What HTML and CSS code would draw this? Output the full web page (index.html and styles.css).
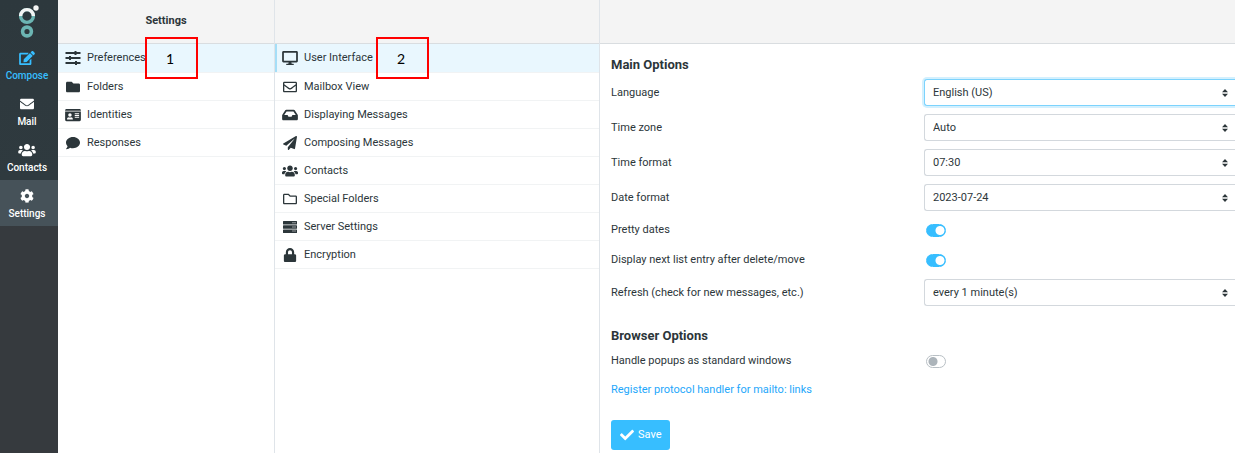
FILE: index.html
```
<!DOCTYPE html>
<html lang="en">

    <head>
        <meta charset="utf-8">
        <title>Settings</title>
        <link rel="stylesheet" href="styles.css">
    </head>

    <body>
        <svg class="sprite" aria-hidden="true">
            <symbol id="edit" viewBox="0 0 576 512"><path d="M402.6 83.2l90.2 90.2c3.8 3.8 3.8 10 0 13.8L274.4 405.6l-92.8 10.3c-12.4 1.4-22.9-9.1-21.5-21.5l10.3-92.8L388.8 83.2c3.8-3.8 10-3.8 13.8 0zm162-22.9l-48.8-48.8c-15.2-15.2-39.9-15.2-55.2 0l-35.4 35.4c-3.8 3.8-3.8 10 0 13.8l90.2 90.2c3.8 3.8 10 3.8 13.8 0l35.4-35.4c15.2-15.3 15.2-40 0-55.2zM384 346.2V448H64V128h229.8c3.2 0 6.2-1.3 8.5-3.5l40-40c7.6-7.6 2.2-20.5-8.5-20.5H48C21.5 64 0 85.5 0 112v352c0 26.5 21.5 48 48 48h352c26.5 0 48-21.5 48-48V306.2c0-10.7-12.9-16-20.5-8.5l-40 40c-2.2 2.3-3.5 5.3-3.5 8.5z"/></symbol>
            <symbol id="mail" viewBox="0 0 512 512"><path d="M48 64h416c26 0 48 22 48 48v20c-60 47-136 105-166 127-22 16-60 49-90 49s-68-33-90-49C136 237 60 179 0 132v-20c0-26 22-48 48-48zM0 172c60 46 120 92 147 112 25 19 65 56 109 56s84-37 109-56c27-20 87-66 147-112v228c0 26-22 48-48 48H48c-26 0-48-22-48-48z"/></symbol>
            <symbol id="users" viewBox="0 0 640 512"><path d="M96 224c35.3 0 64-28.7 64-64s-28.7-64-64-64-64 28.7-64 64 28.7 64 64 64zm448 0c35.3 0 64-28.7 64-64s-28.7-64-64-64-64 28.7-64 64 28.7 64 64 64zm32 32h-64c-17.6 0-33.5 7.1-45.1 18.6 40.3 22.1 68.9 62 75.1 109.4h66c17.7 0 32-14.3 32-32v-32c0-35.3-28.7-64-64-64zm-256 0c61.9 0 112-50.1 112-112S381.9 32 320 32 208 82.1 208 144s50.1 112 112 112zm76.8 32h-8.3c-20.8 10-43.9 16-68.5 16s-47.6-6-68.5-16h-8.3C179.6 288 128 339.6 128 403.2V432c0 26.5 21.5 48 48 48h288c26.5 0 48-21.5 48-48v-28.8c0-63.6-51.6-115.2-115.2-115.2zm-223.7-13.4C161.5 263.1 145.6 256 128 256H64c-35.3 0-64 28.7-64 64v32c0 17.7 14.3 32 32 32h65.9c6.3-47.4 34.9-87.3 75.2-109.4z"/></symbol>
            <symbol id="cog" viewBox="0 0 512 512"><path d="M487.4 315.7l-42.6-24.6c4.3-23.2 4.3-47 0-70.2l42.6-24.6c4.9-2.8 7.1-8.6 5.5-14-11.1-35.6-30-67.8-54.7-94.6-3.8-4.1-10-5.1-14.8-2.3L380.8 110c-17.9-15.4-38.5-27.3-60.8-35.1V25.8c0-5.6-3.9-10.5-9.4-11.7-36.7-8.2-74.3-7.8-109.2 0-5.5 1.2-9.4 6.1-9.4 11.7V75c-22.2 7.9-42.8 19.8-60.8 35.1L88.7 85.5c-4.9-2.8-11-1.9-14.8 2.3-24.7 26.7-43.6 58.9-54.7 94.6-1.7 5.4.6 11.2 5.5 14L67.3 221c-4.3 23.2-4.3 47 0 70.2l-42.6 24.6c-4.9 2.8-7.1 8.6-5.5 14 11.1 35.6 30 67.8 54.7 94.6 3.8 4.1 10 5.1 14.8 2.3l42.6-24.6c17.9 15.4 38.5 27.3 60.8 35.1v49.2c0 5.6 3.9 10.5 9.4 11.7 36.7 8.2 74.3 7.8 109.2 0 5.5-1.2 9.4-6.1 9.4-11.7v-49.2c22.2-7.9 42.8-19.8 60.8-35.1l42.6 24.6c4.9 2.8 11 1.9 14.8-2.3 24.7-26.7 43.6-58.9 54.7-94.6 1.5-5.5-.7-11.3-5.6-14.1zM256 336c-44.1 0-80-35.9-80-80s35.9-80 80-80 80 35.9 80 80-35.9 80-80 80z"/></symbol>
            <symbol id="sliders" viewBox="0 0 16 14"><path d="M.5 1h15v2H.5zM.5 6h15v2H.5zM.5 11h15v2H.5zM9.500 0h2v4h-2zM4 5h2v4H4zM10 10h2v4h-2z"/></symbol>
            <symbol id="folder" viewBox="0 0 512 512"><path d="M464 128H272l-64-64H48C21.49 64 0 85.49 0 112v288c0 26.51 21.49 48 48 48h416c26.51 0 48-21.49 48-48V176c0-26.51-21.49-48-48-48z"/></symbol>
            <symbol id="idcard" viewBox="0 0 576 512"><path fill-rule="evenodd" d="M48 32h480c26 0 48 22 48 48v16H0V80c0-26 22-48 48-48zM0 128h576v304c0 26-22 48-48 48H48c-26 0-48-22-48-48zM176 192a64 64 0 1 0 0 128 64 64 0 1 0 0-128zM68 416h216c0-44-28-76-64-76-28 10-60 10-88 0-36 0-64 32-64 76zM352 192h160v32H352zM352 256h160v32H352zM352 320h160v32H352z"/></symbol>
            <symbol id="comment" viewBox="0 0 512 512"><path d="M256 32C114.6 32 0 125.1 0 240c0 49.6 21.4 95 57 130.7C44.5 421.1 2.7 466 2.2 466.5c-2.2 2.3-2.8 5.7-1.5 8.7S4.8 480 8 480c66.3 0 116-31.8 140.6-51.4 32.7 12.3 69 19.4 107.4 19.4 141.4 0 256-93.1 256-208S397.4 32 256 32z"/></symbol>
            <symbol id="desktop" viewBox="0 0 576 512"><path fill-rule="evenodd" d="M48 0h480c26 0 48 22 48 48v320c0 26-22 48-48 48H336l16 48h56c32 0 32 48 0 48H168c-32 0-32-48 0-48h56l16-48H48c-26 0-48-22-48-48V48C0 22 22 0 48 0zM64 64v288h448V64z"/></symbol>
            <symbol id="envelope" viewBox="0 0 512 512"><path fill-rule="evenodd" d="M48 64h416c26 0 48 22 48 48v288c0 26-22 48-48 48H48c-26 0-48-22-48-48V112c0-26 22-48 48-48zM48 112v41c22 18 58 47 134 106 17 14 50 46 74 46s57-32 74-46c76-59 112-88 134-106v-41zM48 214v186h416V214c-23 18-55 44-105 83-22 18-60 56-103 56s-82-39-103-56C103 258 71 232 48 214z"/></symbol>
            <symbol id="inbox" viewBox="0 0 576 512"><path d="M567.938 243.908L462.25 85.374A48.003 48.003 0 0 0 422.311 64H153.689a48 48 0 0 0-39.938 21.374L8.062 243.908A47.994 47.994 0 0 0 0 270.533V400c0 26.51 21.49 48 48 48h480c26.51 0 48-21.49 48-48V270.533a47.994 47.994 0 0 0-8.062-26.625zM162.252 128h251.497l85.333 128H376l-32 64H232l-32-64H76.918l85.334-128z"/></symbol>
            <symbol id="plane" viewBox="0 0 512 512"><path d="M476 3.2L12.5 270.6c-18.1 10.4-15.8 35.6 2.2 43.2L121 358.4l287.3-253.2c5.5-4.9 13.3 2.6 8.6 8.3L176 407v80.5c0 23.6 28.5 32.9 42.5 15.8L282 426l124.6 52.2c14.2 6 30.4-2.9 33-18.2l72-432C515 7.8 493.3-6.8 476 3.2z"/></symbol>
            <symbol id="folder-open" viewBox="0 0 512 512"><path d="M464 128H272l-54.63-54.63c-6-6-14.14-9.37-22.63-9.37H48C21.49 64 0 85.49 0 112v288c0 26.51 21.49 48 48 48h416c26.51 0 48-21.49 48-48V176c0-26.51-21.49-48-48-48zm0 272H48V112h140.12l54.63 54.63c6 6 14.14 9.37 22.63 9.37H464v224z"/></symbol>
            <symbol id="server" viewBox="0 0 14 14"><path fill-rule="evenodd" d="M.5 1h13q.5 0 .5.5v2.500q0 .5-.5.5H.5Q0 4.500 0 4V1.500Q0 1 .5 1zM.5 5.200h13q.5 0 .5.5v2.500q0 .5-.5.5H.5Q0 8.700 0 8.200V5.700Q0 5.200 .5 5.200zM.5 9.400h13q.5 0 .5.5v2.500q0 .5-.5.5H.5Q0 12.900 0 12.400V9.900Q0 9.400 .5 9.400zM9.500 2.200h1v1h-1zM11.500 2.200h1v1h-1zM9.500 6.400h1v1h-1zM11.500 6.400h1v1h-1zM9.500 10.600h1v1h-1zM11.500 10.600h1v1h-1z"/></symbol>
            <symbol id="lock" viewBox="0 0 448 512"><path d="M400 224h-24v-72C376 68.2 307.8 0 224 0S72 68.2 72 152v72H48c-26.5 0-48 21.5-48 48v192c0 26.5 21.5 48 48 48h352c26.5 0 48-21.5 48-48V272c0-26.5-21.5-48-48-48zm-104 0H152v-72c0-39.7 32.3-72 72-72s72 32.3 72 72v72z"/></symbol>
            <symbol id="check" viewBox="0 0 512 512"><path d="M173.898 439.404l-166.4-166.4c-9.997-9.997-9.997-26.206 0-36.204l36.203-36.204c9.997-9.998 26.207-9.998 36.204 0L192 312.69 432.095 72.596c9.997-9.997 26.207-9.997 36.204 0l36.203 36.204c9.997 9.997 9.997 26.206 0 36.204l-294.4 294.401c-9.998 9.997-26.207 9.997-36.204-.001z"/></symbol>
        </svg>

        <div class="layout">
            <nav class="taskbar">
                <svg class="logo" viewBox="0 0 22 34">
                    <circle cx="9" cy="11" r="6.400" fill="none" stroke="#6cb5b3" stroke-width="3.400"/>
                    <path d="M2.600 11a6.400 6.400 0 0 1 12.800 0" fill="none" stroke="#f4f4f4" stroke-width="3.400"/>
                    <circle cx="9" cy="26.500" r="4.400" fill="none" stroke="#6cb5b3" stroke-width="3.600"/>
                    <circle cx="18" cy="3" r="2.700" fill="#f4f4f4"/>
                </svg>
                <a class="task compose" href="#"><svg class="icon"><use href="#edit"/></svg>Compose</a>
                <a class="task" href="#"><svg class="icon"><use href="#mail"/></svg>Mail</a>
                <a class="task" href="#"><svg class="icon"><use href="#users"/></svg>Contacts</a>
                <a class="task selected" href="#"><svg class="icon"><use href="#cog"/></svg>Settings</a>
            </nav>

            <section class="column sections">
                <header class="header">Settings</header>
                <ul class="listing">
                    <li class="selected"><a href="#"><svg class="icon"><use href="#sliders"/></svg>Preferences</a><span class="marker">1</span></li>
                    <li><a href="#"><svg class="icon"><use href="#folder"/></svg>Folders</a></li>
                    <li><a href="#"><svg class="icon"><use href="#idcard"/></svg>Identities</a></li>
                    <li><a href="#"><svg class="icon"><use href="#comment"/></svg>Responses</a></li>
                </ul>
            </section>

            <section class="column preferences">
                <header class="header"></header>
                <ul class="listing">
                    <li class="selected focused"><a href="#"><svg class="icon"><use href="#desktop"/></svg>User Interface</a><span class="marker">2</span></li>
                    <li><a href="#"><svg class="icon"><use href="#envelope"/></svg>Mailbox View</a></li>
                    <li><a href="#"><svg class="icon"><use href="#inbox"/></svg>Displaying Messages</a></li>
                    <li><a href="#"><svg class="icon"><use href="#plane"/></svg>Composing Messages</a></li>
                    <li><a href="#"><svg class="icon"><use href="#users"/></svg>Contacts</a></li>
                    <li><a href="#"><svg class="icon"><use href="#folder-open"/></svg>Special Folders</a></li>
                    <li><a href="#"><svg class="icon"><use href="#server"/></svg>Server Settings</a></li>
                    <li><a href="#"><svg class="icon"><use href="#lock"/></svg>Encryption</a></li>
                </ul>
            </section>

            <main class="content">
                <header class="header"></header>
                <form class="form">
                    <h2>Main Options</h2>
                    <div class="rows">
                        <div class="row">
                            <label for="language">Language</label>
                            <select id="language" class="focused"><option>English (US)</option></select>
                        </div>
                        <div class="row">
                            <label for="timezone">Time zone</label>
                            <select id="timezone"><option>Auto</option></select>
                        </div>
                        <div class="row">
                            <label for="timeformat">Time format</label>
                            <select id="timeformat"><option>07:30</option></select>
                        </div>
                        <div class="row">
                            <label for="dateformat">Date format</label>
                            <select id="dateformat"><option>2023-07-24</option></select>
                        </div>
                        <div class="row">
                            <label for="prettydate">Pretty dates</label>
                            <input type="checkbox" id="prettydate" checked>
                        </div>
                        <div class="row">
                            <label for="displaynext">Display next list entry after delete/move</label>
                            <input type="checkbox" id="displaynext" checked>
                        </div>
                        <div class="row">
                            <label for="refresh">Refresh (check for new messages, etc.)</label>
                            <select id="refresh"><option>every 1 minute(s)</option></select>
                        </div>
                    </div>

                    <h2>Browser Options</h2>
                    <div class="rows">
                        <div class="row">
                            <label for="popups">Handle popups as standard windows</label>
                            <input type="checkbox" id="popups">
                        </div>
                        <a class="link" href="#">Register protocol handler for mailto: links</a>
                    </div>
                    <button class="save" type="button"><svg class="icon"><use href="#check"/></svg>Save</button>
                </form>
            </main>
        </div>
    </body>

</html>
```

FILE: styles.css
```
* {
    box-sizing: border-box;
}

body {
    margin: 0;
    background: #fff;
    color: #2c363a;
    font-family: Roboto, "Liberation Sans", sans-serif;
    font-size: 11px;
    line-height: 16px;
}

a {
    color: inherit;
    text-decoration: none;
}

.sprite {
    display: none;
}

.icon {
    width: 16px;
    height: 14px;
    fill: currentColor;
}

.layout {
    display: flex;
}

/* left task menu */
.taskbar {
    flex: none;
    width: 58px;
    display: flex;
    flex-direction: column;
    background: linear-gradient(#2d383d, #2f3a3f 180px, #363a3e 230px);
    color: #fff;
    font-weight: 500;
    font-size: 10px;
}

.logo {
    width: 22px;
    height: 34px;
    margin: 5px 0 3px 18px;
}

.task {
    height: 46px;
    padding: 9px 4px 0 0;
    display: flex;
    flex-direction: column;
    align-items: center;
    gap: 3px;
}

.task.compose {
    color: #37beff;
}

.task .icon {
    width: 18px;
}

.task.selected {
    background: #465259;
}

/* list columns */
.column {
    flex: none;
    border-right: 1px solid #dfe4e9;
}

.sections {
    width: 217px;
}

.preferences {
    width: 325px;
}

.header {
    height: 44px;
    padding: 13px 0;
    background: #f4f4f4;
    border-bottom: 1px solid #d9dde0;
    font-weight: bold;
    text-align: center;
}

.listing {
    margin: 0;
    padding: 0;
    list-style: none;
}

.listing li {
    position: relative;
    border-bottom: 1px solid #f1f3f4;
}

.listing a {
    display: flex;
    align-items: center;
    gap: 6px;
    height: 27px;
    padding-left: 7px;
}

.listing .selected {
    background: #e9f7fe;
}

.listing .selected a {
    height: 28px;
}

.listing .focused {
    box-shadow: inset 2px 0 #a5def7;
}

/* numbered callouts drawn over the lists */
.marker {
    position: absolute;
    top: -7px;
    left: 87px;
    z-index: 1;
    width: 53px;
    height: 42px;
    padding-right: 3px;
    border: 2px solid #f00;
    color: #000;
    font: 14px/40px Lato, sans-serif;
    text-align: center;
}

.preferences .marker {
    left: 101px;
}

/* options form */
.content {
    flex: 1;
    min-width: 0;
}

.form {
    padding: 11px 0 3px 11px;
}

h2 {
    margin: 0;
    font-size: 13px;
    line-height: 20px;
}

.rows {
    display: flex;
    flex-direction: column;
    gap: 8px;
    padding: 4px 0 20px;
}

.row {
    display: grid;
    grid-template-columns: 1fr 1fr;
    column-gap: 2px;
    align-items: center;
    min-height: 22px;
}

select {
    appearance: none;
    width: 100%;
    height: 27px;
    padding: 0 8px;
    border: 1px solid #d3d8dd;
    border-right: 0;
    border-radius: 3px 0 0 3px;
    background: #fff url("data:image/svg+xml,%3Csvg xmlns='http://www.w3.org/2000/svg' viewBox='0 0 6 8'%3E%3Cpath fill='%232c363a' d='M0 3.300 3 0l3 3.300zM0 4.700h6L3 8z'/%3E%3C/svg%3E") no-repeat right 7px center / 6px 8px;
    color: inherit;
    font: inherit;
}

select.focused {
    border-color: #7cd3fd;
    box-shadow: 0 0 0 2px #d3f0fe;
}

input[type="checkbox"] {
    appearance: none;
    width: 20px;
    height: 13px;
    margin: 0 2px;
    border: 1px solid #b9c0c5;
    border-radius: 7px;
    background: radial-gradient(circle at 6px center, #acb4ba 4px, #fff 5px);
}

input[type="checkbox"]:checked {
    border-color: #37beff;
    background: radial-gradient(circle at 13px center, #fff 4px, #37beff 5px);
}

.link {
    align-self: flex-start;
    color: #1ea7fb;
    line-height: 20px;
}

.save {
    display: flex;
    align-items: center;
    gap: 3px;
    height: 30px;
    padding: 0 8px;
    border: 0;
    border-radius: 3px;
    background: #37beff;
    color: #fff;
    font: inherit;
}
```
